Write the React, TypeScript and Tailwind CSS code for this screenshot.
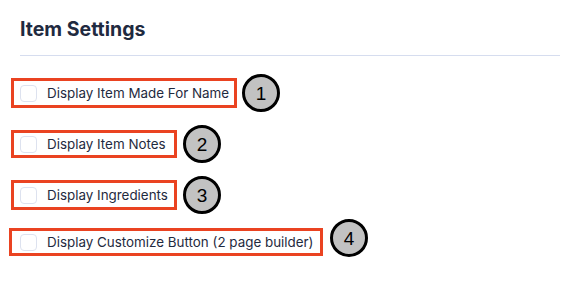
const rows = [
  { label: "Display Item Made For Name", n: 1, box: "w-[226px] h-[30px] -ml-[9px] pl-[6px]", badge: "ml-[5px]" },
  { label: "Display Item Notes", n: 2, box: "w-[166px] h-[28px] -ml-[9px] pl-[6px]", badge: "ml-[6px]" },
  { label: "Display Ingredients", n: 3, box: "w-[166px] h-[30px] -ml-[9px] pl-[6px]", badge: "ml-[6px]" },
  { label: "Display Customize Button (2 page builder)", n: 4, box: "w-[314px] h-[28px] -ml-[11px] pl-[8px]", badge: "ml-[7px] -mt-[8px]" },
];

function Badge({ n, className }: { n: number; className: string }) {
  return (
    <span
      className={`flex h-[38px] w-[38px] shrink-0 items-center justify-center rounded-full border-[3px] border-black bg-[#c2c2c2] font-['Liberation_Sans',Arial,sans-serif] text-[19px] leading-none text-black ${className}`}
    >
      {n}
    </span>
  );
}

export default function App() {
  return (
    <div className="min-h-screen bg-white px-5 pt-[16px] font-['Inter','Noto_Sans',sans-serif]">
      <h2 className="text-[19.5px] font-bold leading-[26px] text-[#1f2a40]">Item Settings</h2>
      <div className="mt-[13px] h-px w-[540px] bg-[#d6ddef]" />

      <div className="mt-[18px] flex flex-col gap-[13px]">
        {rows.map((r) => (
          <div key={r.n} className="flex items-center">
            <label className={`flex items-center gap-[10px] border-[3px] border-[#ea4321] ${r.box}`}>
              <span className="h-[17px] w-[17px] shrink-0 rounded-[4px] border border-[#dde2ef] bg-white" />
              <span className="whitespace-nowrap text-[13.4px] text-[#1f2a40]">{r.label}</span>
            </label>
            <Badge n={r.n} className={r.badge} />
          </div>
        ))}
      </div>
    </div>
  );
}
